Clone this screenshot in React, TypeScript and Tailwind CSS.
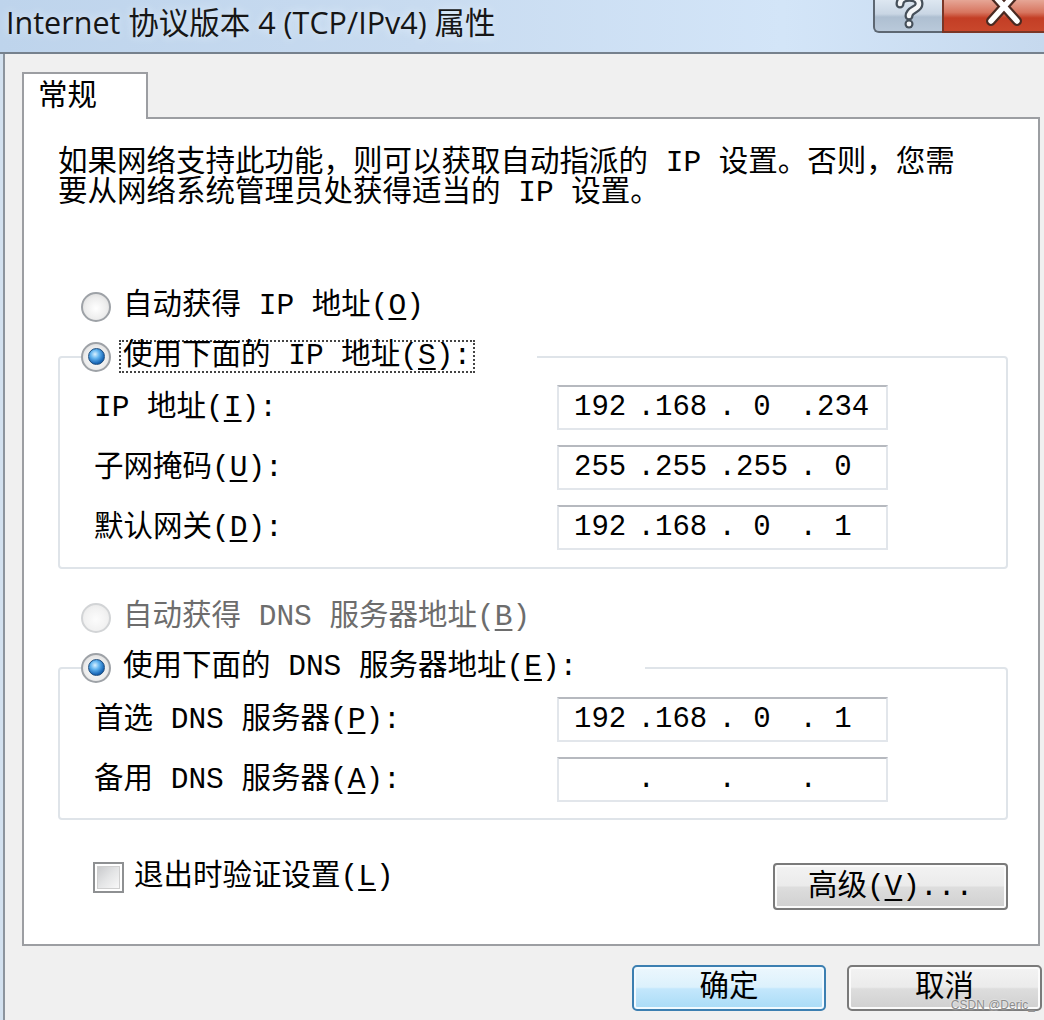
import React from "react";

const BODY = "font-['Liberation_Mono','Noto_Sans_CJK_SC',monospace]";

function Radio({ checked = false, disabled = false }: { checked?: boolean; disabled?: boolean }) {
  return (
    <span
      className={
        disabled
          ? "flex h-[30px] w-[30px] shrink-0 items-center justify-center rounded-full border-2 border-[#d2d4d6] bg-[radial-gradient(circle_at_50%_55%,#fcfcfc_0%,#f2f2f2_55%,#e4e4e4_100%)]"
          : "flex h-[30px] w-[30px] shrink-0 items-center justify-center rounded-full border-2 border-[#9ea2a7] bg-[radial-gradient(circle_at_50%_55%,#ffffff_0%,#ededed_55%,#d2d2d2_100%)]"
      }
    >
      {checked && (
        <span className="h-[17px] w-[17px] rounded-full border border-[#1d4d7e] bg-[radial-gradient(circle_at_40%_35%,#d9f1ff_0%,#63b5f0_32%,#1a68b8_68%,#0b3c74_100%)]" />
      )}
    </span>
  );
}

function IpField({ parts }: { parts: string[] }) {
  return (
    <div className="flex h-[45px] w-[331px] items-center border-2 border-[#e2e6eb] border-t-[#b6b9bf] bg-white pl-[15px] text-[29px] leading-none text-black">
      {parts.map((p, i) => (
        <React.Fragment key={i}>
          <span className="w-[52px] text-center">{p}</span>
          {i < 3 && <span className="w-[29px] text-right">.</span>}
        </React.Fragment>
      ))}
    </div>
  );
}

function Row({ label, parts }: { label: React.ReactNode; parts: string[] }) {
  return (
    <div className="flex h-[45px] items-center">
      <div className="w-[463px] leading-[32px]">{label}</div>
      <IpField parts={parts} />
    </div>
  );
}

function U({ children }: { children: React.ReactNode }) {
  return <u className="underline decoration-[2px] underline-offset-[4px]">{children}</u>;
}

export default function App() {
  return (
    <div className="relative flex h-[1020px] w-[1044px] flex-col overflow-hidden bg-[#f0f0f0]">
      {/* Title bar */}
      <div className="flex h-[52px] shrink-0 items-start bg-[linear-gradient(90deg,#bed4ec_0%,#c8dbf0_40%,#d3e5f8_75%,#c6d9ee_100%)]">
        <div className="pl-[6px] pt-[2px] font-['Open_Sans','Noto_Sans_CJK_SC',sans-serif] text-[30.5px] leading-[40px] text-[#161616] [text-shadow:0_0_8px_#e8f2fc]">
          Internet 协议版本 4 (TCP/IPv4) 属性
        </div>
        <div className="ml-auto flex">
          <div className="h-[33px] w-[69px] rounded-bl-[6px] border-b-2 border-l-2 border-[#5d6772] bg-[linear-gradient(180deg,#dde7f1_0%,#c9d6e4_45%,#aebfd1_55%,#b9c9da_100%)]">
            <svg width="67" height="31" viewBox="0 0 67 31">
              <path d="M25 4 C25 -5 44 -5 44 4 C44 10 34 9 34 16" fill="none" stroke="#46505a" strokeWidth="9" strokeLinecap="round" />
              <path d="M25 4 C25 -5 44 -5 44 4 C44 10 34 9 34 16" fill="none" stroke="#f4f6f8" strokeWidth="4.5" strokeLinecap="round" />
              <circle cx="34" cy="24" r="4.5" fill="#46505a" />
              <circle cx="34" cy="24" r="2.4" fill="#f4f6f8" />
            </svg>
          </div>
          <div className="h-[33px] w-[102px] border-b-2 border-l-2 border-[#7a3626] bg-[linear-gradient(180deg,#e6a696_0%,#d7755f_40%,#c33e25_58%,#c9472c_100%)]">
            <svg width="100" height="31" viewBox="0 0 100 31">
              <path d="M47 -8 L73 21 M73 -8 L47 21" stroke="#4a2a22" strokeWidth="10" strokeLinecap="round" />
              <path d="M47 -8 L73 21 M73 -8 L47 21" stroke="#ffffff" strokeWidth="5.5" strokeLinecap="round" />
            </svg>
          </div>
        </div>
      </div>
      <div className="h-[2px] shrink-0 bg-[#76818d]" />

      {/* Body */}
      <div className="flex flex-1">
        <div className="w-[3px] shrink-0 bg-[#d3e1ef]" />
        <div className={`flex flex-1 flex-col border-l-2 border-[#8c949d] pl-[17px] pt-[18px] ${BODY} text-[29.5px] text-black`}>
          {/* Tab */}
          <div className="relative z-10 -mb-[2px] flex h-[47px] w-[126px] items-center border-2 border-b-0 border-[#9c9ea2] bg-white pl-[14px] leading-[32px]">
            常规
          </div>
          {/* Panel */}
          <div className="h-[829px] w-[1018px] border-2 border-[#9c9ea2] bg-white">
            <p className="pl-[34px] pt-[29px] leading-[30px]">
              如果网络支持此功能，则可以获取自动指派的 IP 设置。否则，您需
              <br />
              要从网络系统管理员处获得适当的 IP 设置。
            </p>

            <div className="ml-[57px] mt-[82px] flex h-[33px] items-center gap-[8px]">
              <Radio />
              <span className="border-2 border-transparent px-[2px] leading-[29px]">
                自动获得 IP 地址(<U>O</U>)
              </span>
            </div>

            <fieldset className="ml-[34px] mt-[17px] w-[950px] rounded-[4px] border-2 border-[#dfe4e9] pb-[17px] pt-[12px]">
              <legend className="ml-[21px] w-[456px]">
                <div className="flex h-[33px] items-center gap-[8px]">
                  <Radio checked />
                  <span className="border-2 border-dotted border-[#444] px-[2px] leading-[29px]">
                    使用下面的 IP 地址(<U>S</U>):
                  </span>
                </div>
              </legend>
              <div className="flex flex-col gap-[15px] pl-[34px]">
                <Row label={<>IP 地址(<U>I</U>):</>} parts={["192", "168", "0", "234"]} />
                <Row label={<>子网掩码(<U>U</U>):</>} parts={["255", "255", "255", "0"]} />
                <Row label={<>默认网关(<U>D</U>):</>} parts={["192", "168", "0", "1"]} />
              </div>
            </fieldset>

            <div className="ml-[57px] mt-[32px] flex h-[33px] items-center gap-[8px] text-[#6d6d6d]">
              <Radio disabled />
              <span className="border-2 border-transparent px-[2px] leading-[29px]">
                自动获得 DNS 服务器地址(<U>B</U>)
              </span>
            </div>

            <fieldset className="ml-[34px] mt-[17px] w-[950px] rounded-[4px] border-2 border-[#dfe4e9] pb-[16px] pt-[13px]">
              <legend className="ml-[21px] w-[564px]">
                <div className="flex h-[33px] items-center gap-[8px]">
                  <Radio checked />
                  <span className="border-2 border-transparent px-[2px] leading-[29px]">
                    使用下面的 DNS 服务器地址(<U>E</U>):
                  </span>
                </div>
              </legend>
              <div className="flex flex-col gap-[15px] pl-[34px]">
                <Row label={<>首选 DNS 服务器(<U>P</U>):</>} parts={["192", "168", "0", "1"]} />
                <Row label={<>备用 DNS 服务器(<U>A</U>):</>} parts={["", "", "", ""]} />
              </div>
            </fieldset>

            <div className="mt-[42px] flex items-start justify-between pl-[69px] pr-[30px]">
              <div className="flex items-center gap-[10px]">
                <span className="flex h-[31px] w-[31px] shrink-0 border-2 border-[#8e9092] bg-white p-[2px]">
                  <span className="h-full w-full border border-[#cfcfcf] bg-[linear-gradient(135deg,#c9cacc_0%,#e4e5e6_50%,#f8f8f8_100%)]" />
                </span>
                <span className="leading-[31px]">
                  退出时验证设置(<U>L</U>)
                </span>
              </div>
              <button className="mt-[1px] flex h-[47px] w-[235px] items-center justify-center rounded-[4px] border-2 border-[#7a7a7a] bg-[linear-gradient(180deg,#f3f3f3_0%,#ebebeb_48%,#dddddd_52%,#d0d0d0_100%)] leading-[30px] shadow-[inset_0_0_0_2px_#fbfbfb]">
                高级(<U>V</U>)...
              </button>
            </div>
          </div>

          {/* Bottom buttons */}
          <div className="mt-[19px] flex justify-end gap-[21px] pr-[2px]">
            <button className="flex h-[46px] w-[194px] items-center justify-center rounded-[5px] border-2 border-[#3c7fb1] bg-[linear-gradient(180deg,#ecf7fd_0%,#dcf1fc_48%,#c3e7fc_52%,#a9dbf6_100%)] leading-[30px] shadow-[inset_0_0_0_2px_#f2faff]">
              确定
            </button>
            <button className="flex h-[46px] w-[195px] items-center justify-center rounded-[5px] border-2 border-[#7a7a7a] bg-[linear-gradient(180deg,#f3f3f3_0%,#ebebeb_48%,#dddddd_52%,#d0d0d0_100%)] leading-[30px] shadow-[inset_0_0_0_2px_#fbfbfb]">
              取消
            </button>
          </div>
        </div>
      </div>

      <div className="absolute bottom-[8px] right-[9px] font-['Liberation_Sans',sans-serif] text-[12px] leading-[14px] text-[#8c8c8c] [text-shadow:0_0_2px_#ffffff]">
        CSDN @Deric_
      </div>
    </div>
  );
}
